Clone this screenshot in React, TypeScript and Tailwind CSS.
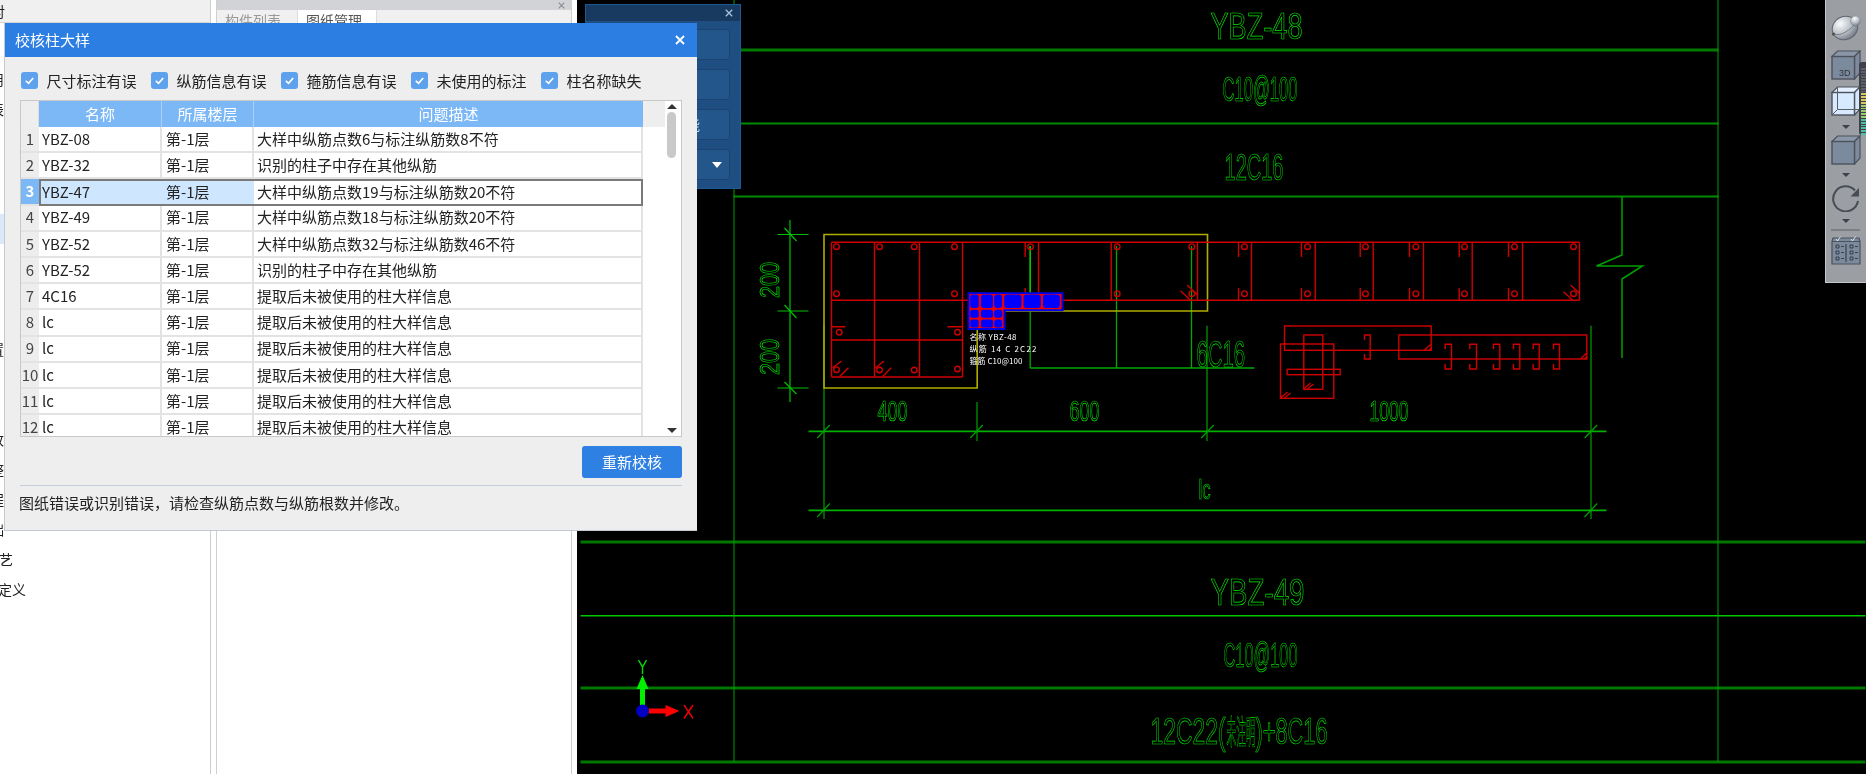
import React from "react";

const rows = [
  ["1", "YBZ-08", "第-1层", "大样中纵筋点数6与标注纵筋数8不符"],
  ["2", "YBZ-32", "第-1层", "识别的柱子中存在其他纵筋"],
  ["3", "YBZ-47", "第-1层", "大样中纵筋点数19与标注纵筋数20不符"],
  ["4", "YBZ-49", "第-1层", "大样中纵筋点数18与标注纵筋数20不符"],
  ["5", "YBZ-52", "第-1层", "大样中纵筋点数32与标注纵筋数46不符"],
  ["6", "YBZ-52", "第-1层", "识别的柱子中存在其他纵筋"],
  ["7", "4C16", "第-1层", "提取后未被使用的柱大样信息"],
  ["8", "lc", "第-1层", "提取后未被使用的柱大样信息"],
  ["9", "lc", "第-1层", "提取后未被使用的柱大样信息"],
  ["10", "lc", "第-1层", "提取后未被使用的柱大样信息"],
  ["11", "lc", "第-1层", "提取后未被使用的柱大样信息"],
  ["12", "lc", "第-1层", "提取后未被使用的柱大样信息"],
];

const checks = ["尺寸标注有误", "纵筋信息有误", "箍筋信息有误", "未使用的标注", "柱名称缺失"];

const tree = ["应用", "图表", "", "", "", "", "", "", "", "重置", "", "", "修改", "调整", "工程", "基础", "工艺", "定义"];

function CadText({ t, x1, x2, top, bottom, color = "#00f000" }: { t: string; x1: number; x2: number; top: number; bottom: number; color?: string }) {
  return (
    <text
      x={x1}
      y={bottom}
      fontSize={(bottom - top) / 0.716}
      textLength={x2 - x1}
      lengthAdjust="spacingAndGlyphs"
      fill="none"
      stroke={color}
      strokeWidth={0.7}
      fontFamily="'Liberation Sans','Noto Sans CJK SC',sans-serif"
    >
      {t}
    </text>
  );
}

function Drawing() {
  const G = "#00a000";
  const R = "#d00000";
  const upperV = [832, 875, 920, 963, 1039, 1111.7, 1198, 1252, 1315.7, 1373.7, 1424, 1472.7, 1523, 1580];
  const ticks = [1025.7, 1239, 1302, 1360.7, 1410, 1459.7, 1509];
  const topC = [837, 880, 914.7, 955, 1031, 1117.7, 1192.3, 1245, 1308, 1366, 1416.3, 1465, 1515, 1574];
  const botC = [837, 955, 1117.7, 1192.3, 1245, 1308, 1366, 1416.3, 1465, 1515, 1574];
  const lowerC: [number, number][] = [[839.7, 332.3], [958, 332.3], [837, 369.7], [880, 370], [914.7, 370], [958, 369]];
  const diag = [
    [833, 368, 842, 361], [840, 376.7, 849, 367.7], [876, 368, 884.3, 361], [883, 376.7, 891.7, 367.7],
    [1181, 290.7, 1190.7, 300], [1187.7, 285, 1198, 295], [1564, 291.7, 1573, 300], [1571, 285, 1580, 293.3],
  ];
  const hooks = [[1365, 1370.7, 335, 359], [1445.7, 1452, 344.3, 369], [1470.3, 1477, 344.3, 369], [1494, 1500.3, 344.3, 369], [1514, 1520.3, 344.3, 369], [1533.7, 1539.7, 344.3, 369], [1554, 1560, 344.3, 369]];
  const corner = [
    [1425, 350, 1431.7, 344], [1430, 350, 1431.7, 348], [1581, 359, 1587.3, 353], [1585, 359, 1587.3, 356.5],
    [1281, 398, 1288, 392], [1285, 398, 1291, 393], [1304.3, 389, 1311, 383], [1308, 389, 1314, 384],
  ];
  const slashX = [824, 977, 1208, 1591.4];
  const cells = [[971, 979], [981.7, 993.3], [995, 1002.3], [1005, 1021.7], [1024.3, 1041], [1043.7, 1060]];
  return (
    <svg viewBox="578 0 1288 774" className="block w-full h-full">
      <g stroke="#008000" fill="none">
        <path d="M734 50H1719" strokeWidth={3} stroke="#007a00" />
        <path d="M734 123.5H1719M734 196.5H1719" strokeWidth={2} stroke="#008c00" />
        <path d="M581 542H1866M581 688H1866M581 762H1866" strokeWidth={3} stroke="#007800" />
        <path d="M581 615.7H1866" strokeWidth={1.5} stroke="#00c800" />
        <path d="M734.5 0V762M1718.5 0V762" strokeWidth={1} stroke="#00a000" />
        <path d="M1622.5 196.5V255L1597 266H1643L1622.5 279V358" strokeWidth={1.5} stroke="#00a000" />
      </g>
      <g stroke={G} fill="none" strokeWidth={1.2}>
        <path d="M790.5 220V402M778 234.5H809M778 311H809M778 388H809" stroke="#00c000" />
        <path d="M785 228L797 241M785 305L797 318M785 382L797 394" stroke="#00c000" />
        <path d="M824.5 325V519M977.5 402V441M1207.5 325.7V441M1591.5 325.7V519" />
        <path d="M809 431.3H1607M809 510.3H1607" strokeWidth={1.8} stroke="#00b000" />
        {slashX.map((x) => (
          <path key={x} d={`M${x - 6.3} 438L${x + 6.3} 425`} />
        ))}
        <path d="M817.7 517L830.3 503.5M1585 517L1597.7 503.5" />
      </g>
      <path d="M1030.7 246V368M1117 246V368M1192 246V368M1030.7 368H1255" stroke="#00a800" strokeWidth={1.3} fill="none" />
      <path d="M1030.7 246V310" stroke="#00d000" strokeWidth={1.3} fill="none" />
      <path d="M824.5 388V234.5H1208V311H977.7V388Z" stroke="#b0ac00" strokeWidth={1.6} fill="none" />
      <g stroke={R} fill="none" strokeWidth={1.4}>
        <path d="M832 242.3H1580M832 300.3H1580M832 340H963M832 377H963" />
        {upperV.map((x) => (
          <path key={x} d={`M${x} 242.3V${x < 964 ? 377 : 300.3}`} />
        ))}
        {ticks.map((x) => (
          <path key={x} d={`M${x} 242.3V257M${x} 288V300.3`} />
        ))}
        {topC.map((x) => (
          <circle key={x} cx={x} cy={246.7} r={2.8} />
        ))}
        {botC.map((x) => (
          <circle key={x} cx={x} cy={293.7} r={2.8} />
        ))}
        {lowerC.map(([x, y], i) => (
          <circle key={i} cx={x} cy={y} r={2.8} />
        ))}
        <path d="M832 326.7H846M948 326.7H963" />
        {diag.map((d, i) => (
          <path key={i} d={`M${d[0]} ${d[1]}L${d[2]} ${d[3]}`} />
        ))}
        <rect x={1285} y={326} width={146.7} height={24.3} />
        <rect x={1399.3} y={335} width={188} height={24} />
        <rect x={1281} y={344} width={53.3} height={54.3} />
        <rect x={1304.3} y={335} width={19} height={54.3} />
        <rect x={1287.7} y={369.3} width={53} height={5.4} />
        {hooks.map((h, i) => (
          <path key={i} d={`M${h[0]} ${h[2] + 5}V${h[2]}H${h[1]}V${h[3]}H${h[0]}V${h[3] - 5}`} />
        ))}
        {corner.map((d, i) => (
          <path key={i} d={`M${d[0]} ${d[1]}L${d[2]} ${d[3]}`} />
        ))}
      </g>
      <path d="M968 292.3H1064V311.3H1006V330H968Z" fill="#0000f0" />
      <path d="M970 294H1062V309.3H1004V328H970Z" fill="#f00000" />
      {cells.map(([a, b], i) => (
        <rect key={i} x={a - 0.3} y={294.5} width={b - a + 0.6} height={13.5} rx={3} fill="#0000ff" />
      ))}
      {cells.slice(0, 3).map(([a, b], i) => (
        <g key={i}>
          <rect x={a - 0.3} y={309.8} width={b - a + 0.6} height={8} rx={2.5} fill="#0000ff" />
          <rect x={a - 0.3} y={319.5} width={b - a + 0.6} height={8} rx={2.5} fill="#0000ff" />
        </g>
      ))}
      <g fill="#ffffff" fontSize={8} fontFamily="'Noto Sans CJK SC',sans-serif">
        <text x={970} y={340} textLength={47} lengthAdjust="spacing">名称 YBZ-48</text>
        <text x={970} y={352} textLength={67} lengthAdjust="spacing">纵筋 14 C 2C22</text>
        <text x={970} y={363.5} textLength={53} lengthAdjust="spacing">箍筋 C10@100</text>
      </g>
      <CadText t="YBZ-48" x1={1211} x2={1303} top={13} bottom={39} />
      <CadText t="C10@100" x1={1223} x2={1298} top={76} bottom={100.5} />
      <CadText t="12C16" x1={1225} x2={1284} top={154} bottom={180} />
      <CadText t="6C16" x1={1197} x2={1245.7} top={340} bottom={366.5} />
      <CadText t="400" x1={878} x2={908} top={400} bottom={420.5} />
      <CadText t="600" x1={1070} x2={1100} top={400} bottom={420.5} />
      <CadText t="1000" x1={1370} x2={1409} top={400} bottom={420.5} />
      <CadText t="lc" x1={1199} x2={1211} top={479} bottom={499} />
      <g transform="rotate(-90 769 280)">
        <CadText t="200" x1={751} x2={787} top={270} bottom={290} />
      </g>
      <g transform="rotate(-90 769 357)">
        <CadText t="200" x1={751} x2={787} top={347} bottom={367} />
      </g>
      <CadText t="YBZ-49" x1={1211} x2={1305} top={578} bottom={604.5} />
      <CadText t="C10@100" x1={1224} x2={1298} top={641} bottom={666.5} />
      <CadText t="12C22(" x1={1151} x2={1226} top={717} bottom={744} />
      <CadText t="未注明" x1={1227} x2={1256} top={720} bottom={744} />
      <CadText t=")+8C16" x1={1256} x2={1328} top={717} bottom={744} />
      <path d="M640.5 711V689H637L643 675L649 689H645.5V711Z" fill="#00f000" />
      <path d="M649 708.5H666V705L680 711L666 717V713.5H649Z" fill="#ff0000" />
      <circle cx={643} cy={711} r={6.5} fill="#0000c0" />
      <path d="M639 660L643 667L647 660M643 667V674" stroke="#00e000" strokeWidth={1.4} fill="none" />
      <path d="M684.5 705L693.5 718.5M693.5 705L684.5 718.5" stroke="#f00000" strokeWidth={1.4} fill="none" />
    </svg>
  );
}

function Cube({ variant }: { variant: "3d" | "glass" | "plain" }) {
  const glass = variant === "glass";
  return (
    <svg viewBox="0 0 30 30" className="block w-[30px] h-[30px]">
      <path d="M1 6.5L6.5 1H29L23.5 6.5Z" fill={glass ? "#e4f0ff" : "#8b97a8"} stroke="#4c525c" strokeWidth={1.2} />
      <path d="M23.5 6.5L29 1V23L23.5 29Z" fill={glass ? "#d6e8fd" : "#7f8b9c"} stroke="#4c525c" strokeWidth={1.2} />
      <rect x={1} y={6.5} width={22.5} height={22.5} fill={glass ? "#d8eaff" : "#7c8a9e"} stroke="#4c525c" strokeWidth={1.4} />
      {glass && <path d="M6.5 1V23.5H29M6.5 23.5L1 29" fill="none" stroke="#5a6068" strokeWidth={1} />}
      {variant === "3d" && (
        <text x={8} y={26} fontSize={9} fontFamily="'Liberation Sans',sans-serif" fill="#2e333a">
          3D
        </text>
      )}
    </svg>
  );
}

function Tri() {
  return <div className="w-0 h-0 border-x-[4px] border-x-transparent border-t-[4px] border-t-[#3d4148]" />;
}

function Toolbar() {
  const stripes = Array.from({ length: 24 }, (_, i) => i);
  return (
    <div className="absolute right-0 top-0 w-[41px] h-[283px] bg-[#9b9ea3] border-b border-l border-[#c4c6c9] flex flex-col items-center pr-[1px]">
      <svg viewBox="0 0 30 28" className="block w-[30px] h-[28px] mt-[13px]">
        <defs>
          <radialGradient id="s1" cx="40%" cy="25%" r="80%">
            <stop offset="0%" stopColor="#fafbfc" />
            <stop offset="55%" stopColor="#b8bec6" />
            <stop offset="100%" stopColor="#68707c" />
          </radialGradient>
        </defs>
        <ellipse cx={14} cy={15} rx={13} ry={11.5} transform="rotate(-25 14 15)" fill="url(#s1)" stroke="#5f6570" strokeWidth={1} />
        <path d="M3 21C10 24 20 16 25 10" fill="none" stroke="#6a7079" strokeWidth={0.8} />
        <circle cx={24.5} cy={8} r={5} fill="url(#s1)" stroke="#7a808a" strokeWidth={0.5} />
        <circle cx={2.5} cy={21} r={1.6} fill="#5a4f45" />
      </svg>
      <div className="mt-[9px]"><Cube variant="3d" /></div>
      <div className="mt-[6px]"><Cube variant="glass" /></div>
      <div className="mt-[9px]"><Tri /></div>
      <div className="mt-[6px]"><Cube variant="plain" /></div>
      <div className="mt-[8px]"><Tri /></div>
      <svg viewBox="0 0 30 28" className="block w-[30px] h-[28px] mt-[7px]">
        <path d="M24 6.5A12.5 12.5 0 1 0 27 17" fill="none" stroke="#484c54" strokeWidth={2} />
        <path d="M28 4V12.5H19.5Z" fill="#484c54" />
      </svg>
      <div className="mt-[7px]"><Tri /></div>
      <div className="mt-[6px] w-[29px] h-[2px] bg-[#7c7f84]" />
      <svg viewBox="0 0 30 30" className="block w-[30px] h-[30px] mt-[4px]">
        <path d="M2 3H28L29 6.5V29H1V6.5Z" fill="#7c8a9e" stroke="#4c525c" strokeWidth={1.2} />
        <path d="M1 6.5H29" stroke="#4c525c" strokeWidth={1} />
        <path d="M15 9V27" stroke="#2e333a" strokeWidth={1} />
        <path d="M5 4L6.5 6L9.5 1.5M20 4L21.5 6L24.5 1.5" stroke="#e8ecf0" strokeWidth={0.9} fill="none" />
        <path d="M5 10h3v3h-3zM5 16h3v3h-3zM5 22h3v3h-3zM19 10h3v3h-3zM19 16h3v3h-3zM19 22h3v3h-3z" fill="none" stroke="#2a2f36" strokeWidth={0.8} />
        <path d="M10 11.5h3M10 17.5h3M10 23.5h3M24 11.5h3M24 17.5h3M24 23.5h3" stroke="#2a2f36" strokeWidth={0.8} />
      </svg>
      <div className="absolute left-[33px] top-[62px] w-[8px] h-[73px] bg-[#3e4149] rounded-l-[3px] flex flex-col gap-[1px] pt-[6px] pl-[2px]">
        {stripes.map((i) => (
          <div
            key={i}
            className={i < 9 ? "h-[2px] bg-[#5d6068]" : i < 13 ? "h-[2px] bg-[#d6c85a]" : i < 18 ? "h-[2px] bg-[#9cc96b]" : "h-[2px] bg-[#4cc0a0]"}
          />
        ))}
      </div>
    </div>
  );
}

function BluePanel() {
  return (
    <div className="absolute left-[585px] top-[4px] w-[156px] h-[185px] bg-[#1f4f82] border border-[#1c5a96] flex flex-col">
      <div className="h-[16px] bg-[#183a60] flex items-center justify-end pr-[7px]">
        <svg viewBox="0 0 10 10" className="w-[8px] h-[8px]">
          <path d="M1 1L9 9M9 1L1 9" stroke="#a9c4dd" strokeWidth={1.6} />
        </svg>
      </div>
      <div className="flex flex-col gap-[9px] pt-[8px] pl-[10px] pr-[10px]">
        <div className="h-[31px] bg-[#23568a] rounded-[3px] border border-[#1b4470]" />
        <div className="h-[31px] bg-[#23568a] rounded-[3px] border border-[#1b4470]" />
        <div className="h-[31px] bg-[#23568a] rounded-[3px] border border-[#1b4470] flex items-center justify-end pr-[29px] text-[14px] text-[#c2d4e6]">识别功能</div>
        <div className="h-[31px] bg-[#23568a] rounded-[3px] border border-[#1b4470] flex items-center justify-end pr-[7px]">
          <div className="w-0 h-0 border-x-[5px] border-x-transparent border-t-[6px] border-t-white" />
        </div>
      </div>
    </div>
  );
}

function Dialog() {
  return (
    <div className="absolute left-[4px] top-[23px] w-[693px] h-[508px] bg-[#eeeeee] border-l border-b border-[#c3c9d3] flex flex-col text-[15px] text-[#222]">
      <div className="h-[34px] shrink-0 bg-[#2d7ee2] flex items-center justify-between pl-[10px] pr-[12px] text-white">
        <span>校核柱大样</span>
        <svg viewBox="0 0 10 10" className="w-[10px] h-[10px]">
          <path d="M1 1L9 9M9 1L1 9" stroke="#ffffff" strokeWidth={1.8} />
        </svg>
      </div>
      <div className="flex h-[17px] mt-[15px] pl-[16px] shrink-0">
        {checks.map((c) => (
          <div key={c} className="w-[130px] flex items-center gap-[8.5px] leading-none">
            <div className="w-[17px] h-[17px] rounded-[3px] bg-[#5ea2ee] flex items-center justify-center">
              <svg viewBox="0 0 12 12" className="w-[11px] h-[11px]">
                <path d="M2 6.3L5 9L10 3.2" fill="none" stroke="#ffffff" strokeWidth={1.8} />
              </svg>
            </div>
            <span>{c}</span>
          </div>
        ))}
      </div>
      <div className="mt-[11px] mx-[15px] h-[337px] shrink-0 bg-white border border-[#c8c8c8] flex overflow-hidden">
        <div className="w-[644px] shrink-0 flex flex-col">
          <div className="flex h-[26px] shrink-0 bg-[#eeeeee]">
            <div className="w-[18px] border-r border-[#dddddd]" />
            <div className="w-[123px] bg-[#7cb8f6] border-r border-[#a8d0f8] text-white flex items-center justify-center">名称</div>
            <div className="w-[92px] bg-[#7cb8f6] border-r border-[#a8d0f8] text-white flex items-center justify-center">所属楼层</div>
            <div className="w-[389px] bg-[#7cb8f6] text-white flex items-center justify-center">问题描述</div>
          </div>
          {rows.map((r) => {
            const sel = r[0] === "3";
            return (
              <div key={r[0]} className="flex h-[26.2px] shrink-0 items-stretch">
                <div className={sel ? "w-[18px] shrink-0 bg-[#7cb8f6] text-white font-bold flex items-center justify-center border-b-2 border-[#e3e3e3]" : "w-[18px] shrink-0 bg-[#ededed] text-[#444] flex items-center justify-center border-b-2 border-[#e3e3e3] whitespace-nowrap"}>
                  {r[0]}
                </div>
                <div className="relative flex w-[604px] shrink-0">
                  <div className={sel ? "w-[123px] shrink-0 bg-[#cfe6ff] pl-[3px] flex items-center" : "w-[123px] shrink-0 border-r-2 border-b-2 border-[#e3e3e3] pl-[3px] flex items-center"}>{r[1]}</div>
                  <div className={sel ? "w-[92px] shrink-0 bg-[#cfe6ff] pl-[4px] flex items-center" : "w-[92px] shrink-0 border-r-2 border-b-2 border-[#e3e3e3] pl-[4px] flex items-center"}>{r[2]}</div>
                  <div className={sel ? "w-[389px] shrink-0 pl-[3px] flex items-center" : "w-[389px] shrink-0 border-b-2 border-r-2 border-[#e3e3e3] pl-[3px] flex items-center"}>{r[3]}</div>
                  {sel && <div className="absolute top-0 bottom-0 left-0 w-[604px] border-2 border-[#7a7a7a]" />}
                </div>
              </div>
            );
          })}
        </div>
        <div className="flex-1 flex flex-col items-center pr-[3px]">
          <div className="mt-[3px] w-0 h-0 border-x-[5px] border-x-transparent border-b-[5px] border-b-[#333]" />
          <div className="mt-[3px] w-[9px] h-[46px] rounded-full bg-[#c9c9c9]" />
          <div className="mt-auto mb-[3px] w-0 h-0 border-x-[5px] border-x-transparent border-t-[5px] border-t-[#333]" />
        </div>
      </div>
      <div className="flex justify-end mx-[15px] mt-[9px] shrink-0">
        <div className="w-[100px] h-[32px] rounded-[3px] bg-[#2f80e3] text-white flex items-center justify-center">重新校核</div>
      </div>
      <div className="mx-[15px] mt-[7px] h-[1px] bg-[#c5cfdb] shrink-0" />
      <div className="ml-[14px] mt-[6px] text-[15px] leading-[22px] text-[#222] whitespace-nowrap">图纸错误或识别错误，请检查纵筋点数与纵筋根数并修改。</div>
    </div>
  );
}

export default function App() {
  return (
    <div className="relative w-[1866px] h-[774px] overflow-hidden flex bg-white font-['Noto_Sans_CJK_SC','Noto_Sans',sans-serif] blur-[0.4px]">
      <div className="w-[211px] shrink-0 border-r border-[#cfcfcf] bg-white overflow-hidden text-[14px] text-[#222]">
        <div className="h-[23px] bg-[#f0f0f0] border-b border-[#d4d4d4] flex items-center pl-0">
          <span className="-ml-[9px]">对</span>
        </div>
        <div className="pt-[41px] flex flex-col">
          {tree.map((t, i) => (
            <div
              key={i}
              className={i === 5 ? "h-[30px] shrink-0 flex items-center bg-[#dbe8f7]" : "h-[30px] shrink-0 flex items-center"}
            >
              <span className={i === 17 ? "-ml-[2px] whitespace-nowrap" : i === 16 ? "-ml-[15px] whitespace-nowrap" : "-ml-[24px] whitespace-nowrap"}>{t}</span>
            </div>
          ))}
        </div>
      </div>
      <div className="w-[5px] shrink-0 bg-white" />
      <div className="w-[356px] shrink-0 border-x border-[#cfcfcf] bg-white flex flex-col">
        <div className="h-[10px] bg-[#d2d3d6] flex items-center justify-end pr-[6px]">
          <svg viewBox="0 0 10 10" className="w-[7px] h-[7px]">
            <path d="M1 1L9 9M9 1L1 9" stroke="#8c8c90" strokeWidth={1.6} />
          </svg>
        </div>
        <div className="h-[14px] bg-[#f0f0f0] flex text-[14px] text-[#999] overflow-hidden">
          <div className="w-[80px] pl-[8px] leading-[20px]">构件列表</div>
          <div className="w-[80px] bg-white text-[#555] pl-[8px] leading-[20px] border-x border-[#ddd]">图纸管理</div>
        </div>
      </div>
      <div className="w-[5px] shrink-0 bg-white" />
      <div className="flex-1 bg-black relative overflow-hidden">
        <Drawing />
      </div>
      <BluePanel />
      <Dialog />
      <Toolbar />
    </div>
  );
}
